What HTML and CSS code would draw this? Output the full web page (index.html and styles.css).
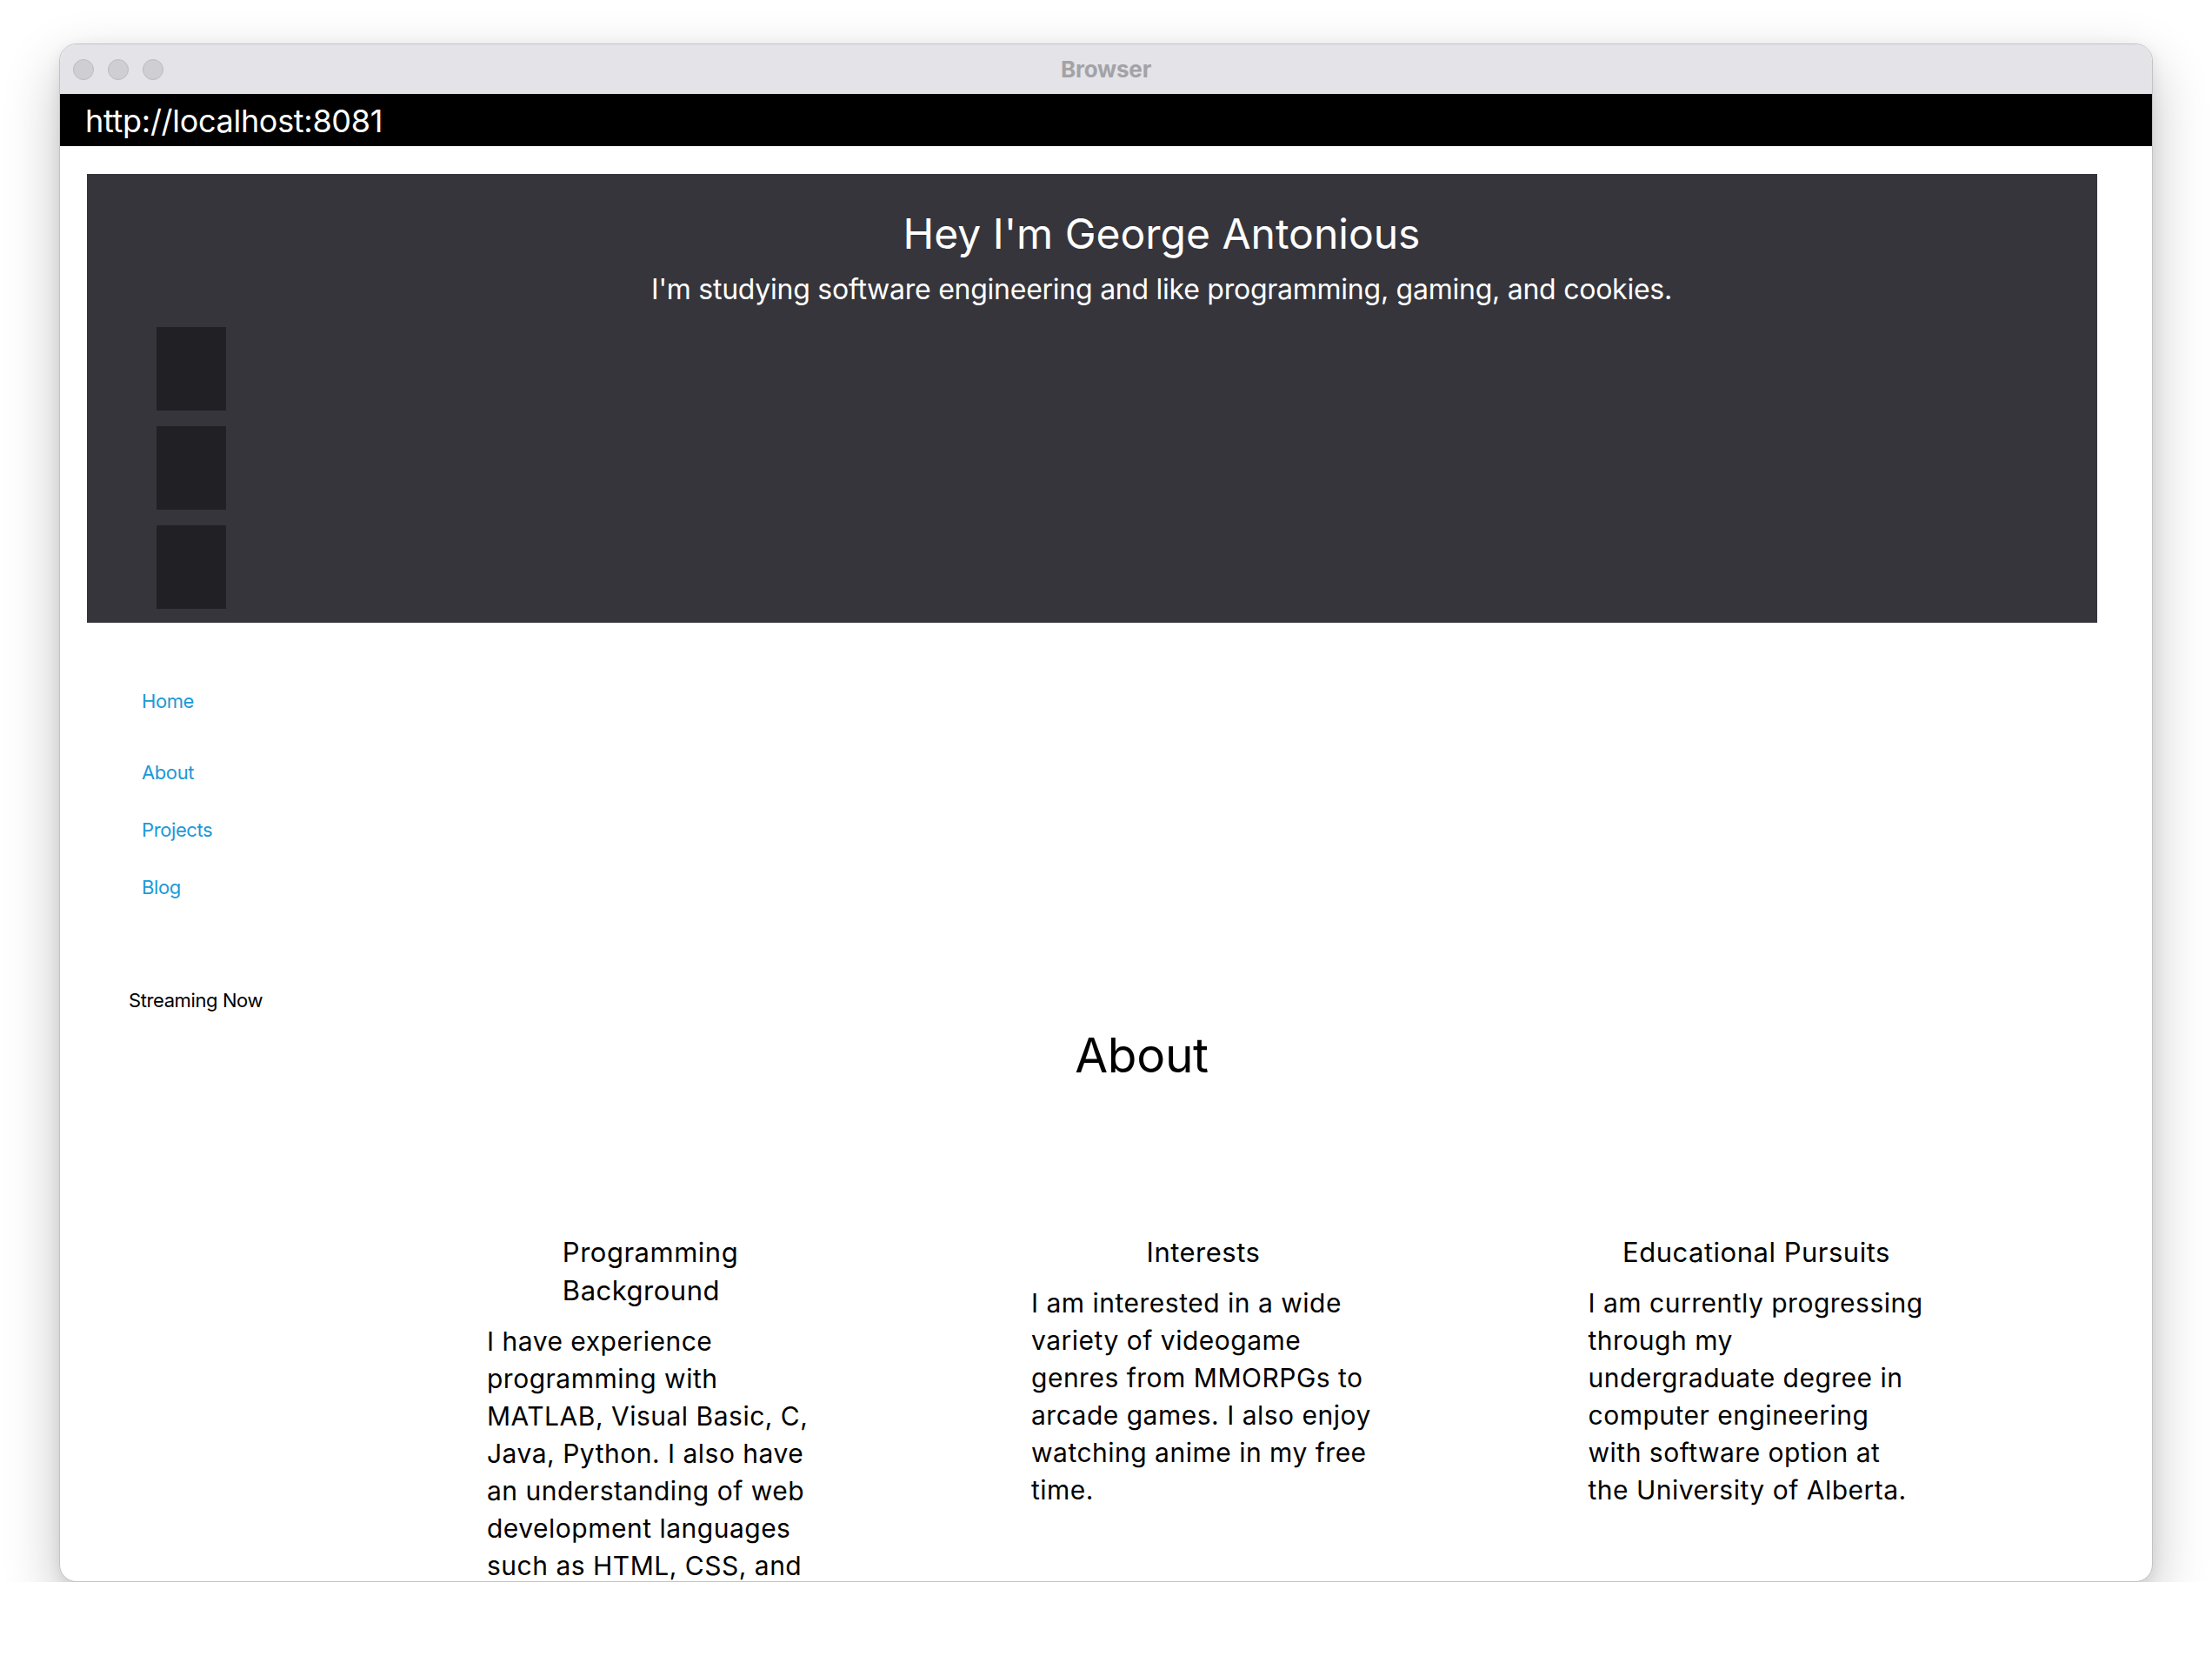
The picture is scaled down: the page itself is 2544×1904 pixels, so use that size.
FILE: index.html
```html
<!DOCTYPE html>
<html lang="en">
<head>
<meta charset="utf-8">
<title>George Antonious</title>
<link rel="stylesheet" href="styles.css">
</head>
<body>
<div class="window">
  <div class="titlebar">
    <div class="lights">
      <span class="light"></span>
      <span class="light"></span>
      <span class="light"></span>
    </div>
    <div class="title">Browser</div>
    <div class="spacer"></div>
  </div>
  <div class="urlbar">http://localhost:8081</div>
  <div class="viewport">
    <div class="page">
      <header class="hero">
        <div class="social">
          <a class="social-btn" href="#"></a>
          <a class="social-btn" href="#"></a>
          <a class="social-btn" href="#"></a>
        </div>
        <div class="intro">
          <h1 class="intro-title">Hey I'm George Antonious</h1>
          <p class="intro-sub">I'm studying software engineering and like programming, gaming, and cookies.</p>
        </div>
      </header>

      <nav class="nav">
        <ul class="nav-list">
          <li class="nav-item nav-item-home"><a class="nav-link" href="#">Home</a></li>
          <li class="nav-item"><a class="nav-link" href="#">About</a></li>
          <li class="nav-item"><a class="nav-link" href="#">Projects</a></li>
          <li class="nav-item"><a class="nav-link" href="#">Blog</a></li>
        </ul>
      </nav>

      <div class="streaming">Streaming Now</div>

      <main class="about">
        <h2 class="about-title">About</h2>
        <div class="cols">
          <section class="col">
            <h3 class="col-title col-title-tight">Programming Background</h3>
            <p class="col-text col-text-narrow">I have experience programming with MATLAB, Visual Basic, C, Java, Python. I also have an understanding of web development languages such as HTML, CSS, and JavaScript.</p>
          </section>
          <section class="col">
            <h3 class="col-title">Interests</h3>
            <p class="col-text col-text-wide">I am interested in a wide variety of videogame genres from MMORPGs to arcade games. I also enjoy watching anime in my free time.</p>
          </section>
          <section class="col">
            <h3 class="col-title">Educational Pursuits</h3>
            <p class="col-text">I am currently progressing through my undergraduate degree in computer engineering with software option at the University of Alberta.</p>
          </section>
        </div>
      </main>
    </div>
  </div>
</div>
</body>
</html>
```
FILE: styles.css
```css
* { box-sizing: border-box; }

html, body {
  margin: 0;
  padding: 0;
  background: #ffffff;
}

body {
  font-family: "Inter", "Roboto", sans-serif;
  color: #000;
  padding-top: 50px;
}

.window {
  width: 2408px;
  height: 1769px;
  margin: 0 auto;
  border: 1px solid #c3c3c6;
  border-radius: 20px;
  overflow: hidden;
  display: flex;
  flex-direction: column;
  background: #fff;
  box-shadow: 0 26px 64px rgba(0, 0, 0, 0.24), 0 4px 16px rgba(0, 0, 0, 0.08);
}

.titlebar {
  height: 57px;
  flex: none;
  background: #e4e3e8;
  display: grid;
  grid-template-columns: 1fr auto 1fr;
  align-items: center;
}

.lights {
  display: flex;
  gap: 16px;
  padding-left: 15px;
}

.light {
  width: 24px;
  height: 24px;
  border-radius: 50%;
  background: #cfced3;
  border: 1px solid #bcbbc0;
}

.title {
  font-weight: 700;
  font-size: 26px;
  letter-spacing: -0.2px;
  color: #a3a2a7;
}

.urlbar {
  height: 60px;
  flex: none;
  background: #000;
  color: #fff;
  font-size: 36px;
  letter-spacing: -0.3px;
  line-height: 62px;
  padding-left: 29px;
}

.viewport {
  flex: 1;
  overflow: hidden;
}

.page {
  padding: 32px 63px 0 31px;
}

/* hero */
.hero {
  display: flex;
  background: #36353b;
  padding-bottom: 16px;
}

.social {
  width: 160px;
  flex: none;
  padding: 176px 0 0 80px;
  display: flex;
  flex-direction: column;
  gap: 18px;
}

.social-btn {
  display: block;
  width: 80px;
  height: 96px;
  background: #202025;
}

.intro {
  flex: 1;
  text-align: center;
  color: #fff;
  padding-top: 39px;
}

.intro-title {
  margin: 0;
  font-size: 48px;
  font-weight: 400;
  line-height: 60px;
}

.intro-sub {
  margin: 12px 0 0;
  font-size: 32px;
  letter-spacing: -0.25px;
  line-height: 44px;
}

/* nav */
.nav-list {
  list-style: none;
  margin: 75px 0 0;
  padding: 0 0 0 63px;
  display: flex;
  flex-direction: column;
  gap: 36px;
}

.nav-item {
  font-size: 22px;
  letter-spacing: -0.4px;
  line-height: 30px;
}

.nav-item-home {
  margin-bottom: 16px;
}

.nav-link {
  color: #1b99d7;
  text-decoration: none;
}

.streaming {
  margin-top: 100px;
  padding-left: 48px;
  font-size: 22px;
  letter-spacing: -0.4px;
  line-height: 30px;
}

/* about */
.about-title {
  margin: 15px 0 0 114px;
  font-size: 55px;
  font-weight: 400;
  letter-spacing: -0.3px;
  line-height: 66px;
  text-align: center;
}

.cols {
  margin: 172px 0 0 330px;
  display: grid;
  grid-template-columns: repeat(3, 636px);
}

.col {
  display: flex;
  flex-direction: column;
  align-items: center;
}

.col-title {
  width: 387px;
  margin: 0 0 15px;
  font-size: 31px;
  font-weight: 400;
  letter-spacing: 0.5px;
  line-height: 44px;
  text-align: center;
}

.col-title-tight {
  width: min-content;
  text-align: left;
}

.col-text {
  width: 387px;
  margin: 0;
  font-size: 30px;
  letter-spacing: 0.5px;
  line-height: 43px;
}

.col-text-narrow {
  width: 376px;
}

.col-text-wide {
  width: 396px;
}
```
